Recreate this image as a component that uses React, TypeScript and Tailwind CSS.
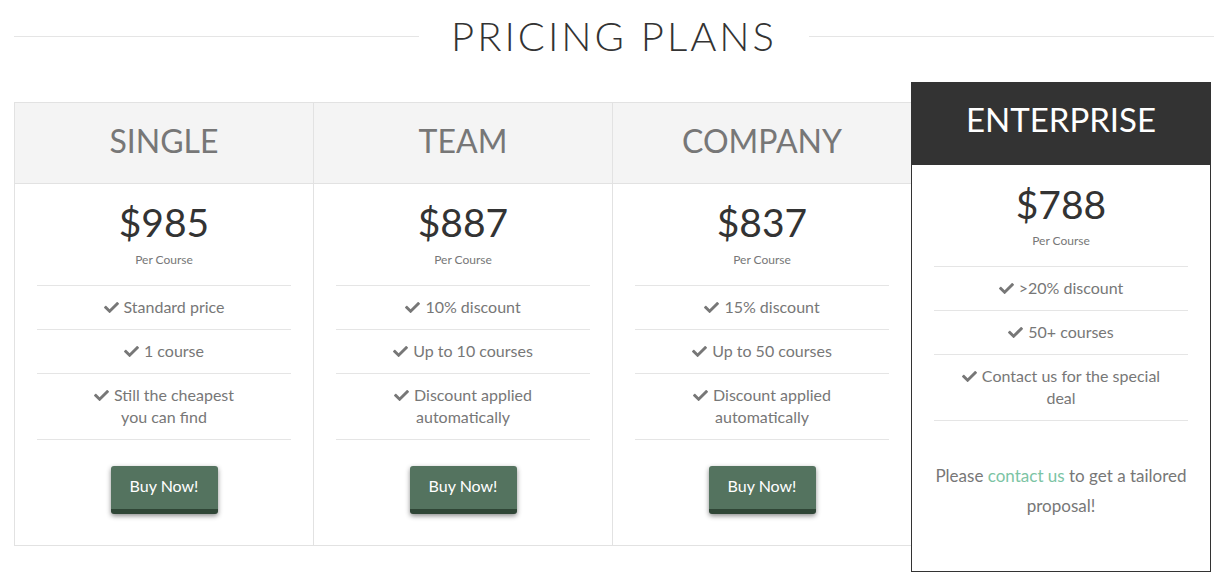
import { FaCheck } from "react-icons/fa";

type Plan = {
  name: string;
  price: string;
  features: string[][];
};

const plans: Plan[] = [
  { name: "SINGLE", price: "$985", features: [["Standard price"], ["1 course"], ["Still the cheapest", "you can find"]] },
  { name: "TEAM", price: "$887", features: [["10% discount"], ["Up to 10 courses"], ["Discount applied", "automatically"]] },
  { name: "COMPANY", price: "$837", features: [["15% discount"], ["Up to 50 courses"], ["Discount applied", "automatically"]] },
];

const enterpriseFeatures = [[">20% discount"], ["50+ courses"], ["Contact us for the special", "deal"]];

function Features({ items }: { items: string[][] }) {
  return (
    <ul className="border-t border-[#e5e5e5]">
      {items.map((lines) => (
        <li key={lines[0]} className="border-b border-[#e5e5e5] pt-[10px] pb-[11px] text-center text-[16px] leading-[22px] text-[#777]">
          {lines.map((line, i) => (
            <div key={line}>
              {i === 0 && <FaCheck className="mr-[5px] inline-block h-[15px] w-[15px] -translate-y-[1px] align-middle text-[#777]" />}
              {line}
            </div>
          ))}
        </li>
      ))}
    </ul>
  );
}

export default function App() {
  return (
    <div className="min-h-[577px] bg-white font-[Lato,sans-serif]">
      <div className="ml-[14px] w-[1200px]">
        <div className="flex items-center gap-8 pt-3">
          <div className="h-px flex-1 bg-[#e5e5e5]" />
          <h1 className="text-[40px] font-light leading-[48px] tracking-[3px] text-[#333]">PRICING PLANS</h1>
          <div className="h-px flex-1 bg-[#e5e5e5]" />
        </div>

        <div className="mt-[22px] flex items-start">
          {plans.map((plan) => (
            <div key={plan.name} className="mt-[20px] w-[299px] border-y border-l border-[#e2e2e2]">
              <div className="flex h-[81px] items-center justify-center border-b border-[#e2e2e2] bg-[#f4f4f4] pb-[4px] text-[32px] text-[#777]">
                {plan.name}
              </div>
              <div className="px-[22px] pt-[14px] pb-[31px]">
                <p className="text-center text-[39px] leading-[48px] text-[#333]">{plan.price}</p>
                <p className="mt-[7px] text-center text-[12px] leading-[14px] text-[#777]">Per Course</p>
                <div className="mt-[18px]">
                  <Features items={plan.features} />
                </div>
                <div className="mt-[26px] flex justify-center">
                  <button
                    type="button"
                    className="h-[48px] w-[107px] rounded-[3px] border-b-[5px] border-[#2f4636] bg-[#54735f] pb-[3px] text-[16px] text-white shadow-[0_2px_5px_rgba(0,0,0,0.45)]"
                  >
                    Buy Now!
                  </button>
                </div>
              </div>
            </div>
          ))}

          <div className="w-[300px] border border-[#333]">
            <div className="flex h-[82px] items-center justify-center bg-[#333] pb-[8px] text-[33px] text-white">ENTERPRISE</div>
            <div className="px-[22px] pt-[15px] pb-[50px]">
              <p className="text-center text-[39px] leading-[48px] text-[#333]">$788</p>
              <p className="mt-[6px] text-center text-[12px] leading-[14px] text-[#777]">Per Course</p>
              <div className="mt-[18px]">
                <Features items={enterpriseFeatures} />
              </div>
              <p className="mt-[40px] text-center text-[17px] leading-[30px] text-[#777]">
                Please <a className="text-[#7cc4a4]">contact us</a> to get a tailored proposal!
              </p>
            </div>
          </div>
        </div>
      </div>
    </div>
  );
}
